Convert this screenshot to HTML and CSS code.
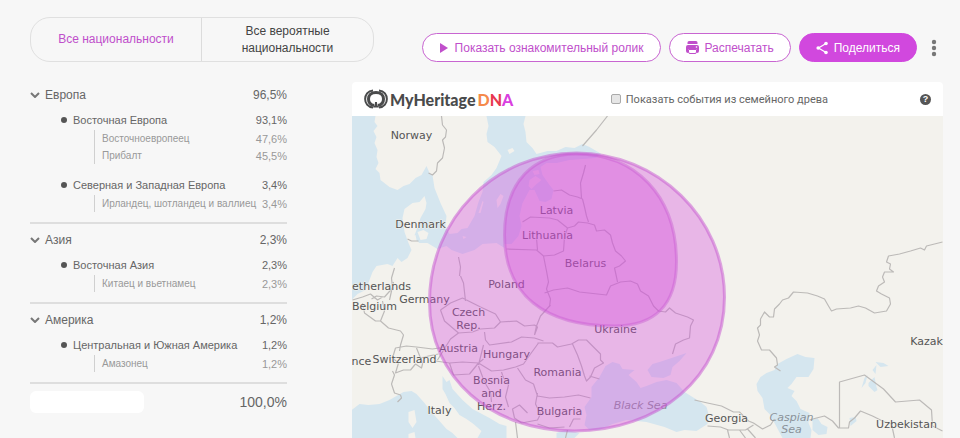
FILE: index.html
```html
<!DOCTYPE html>
<html lang="ru">
<head>
	<meta charset="utf-8">
	<meta name="viewport" content="width=device-width, initial-scale=1">
	<title>MyHeritage DNA</title>
	<link rel="stylesheet" href="styles.css">
</head>
<body>
	<div class="page">
		<header class="topBar">
			<div class="tabs">
				<button type="button" class="tab on">Все национальности</button>
				<button type="button" class="tab">Все вероятные национальности</button>
			</div>
			<div class="actions">
				<button type="button" class="btn">
					<svg class="icoPlay" width="10" height="12" viewBox="0 0 10 12"><path d="M1 1v10l8-5z"/></svg>
					Показать ознакомительный ролик
				</button>
				<button type="button" class="btn">
					<svg class="icoPrint" width="13" height="13" viewBox="0 0 13 13">
						<path d="M3 0h7a1.500 1.500 0 0 1 1.500 1.500V3h-10V1.500A1.500 1.500 0 0 1 3 0z"/>
						<path d="M2 4h9a2 2 0 0 1 2 2v4a2 2 0 0 1-2 2V8H2v4a2 2 0 0 1-2-2V6a2 2 0 0 1 2-2z"/>
						<path d="M2.500 8.500h8V11a1.500 1.500 0 0 1-1.500 1.500H4A1.500 1.500 0 0 1 2.500 11z" fill="none" stroke="currentColor"/>
						<circle cx="10.500" cy="6" r="0.800" fill="#fff"/>
					</svg>
					Распечатать
				</button>
				<button type="button" class="btn share">
					<svg class="icoShare" width="12" height="14" viewBox="0 0 12 14">
						<path d="M10 2.500L2.500 7l7.500 4.500" fill="none" stroke="currentColor" stroke-width="1.300"/>
						<circle cx="10" cy="2.500" r="1.800"/><circle cx="2.200" cy="7" r="1.800"/><circle cx="10" cy="11.500" r="1.800"/>
					</svg>
					Поделиться
				</button>
				<button type="button" class="more" aria-label="Ещё">
					<svg width="6" height="18" viewBox="0 0 6 18"><circle cx="3" cy="3" r="2.200"/><circle cx="3" cy="9" r="2.200"/><circle cx="3" cy="15" r="2.200"/></svg>
				</button>
			</div>
		</header>

		<div class="content">
			<aside class="list">
				<section class="group">
					<button type="button" class="row groupName">
						<svg class="arrow" width="10" height="6" viewBox="0 0 10 6"><path d="M1 1l4 4 4-4"/></svg>
						<span>Европа</span><span class="num">96,5%</span>
					</button>
					<div class="region">
						<div class="row regionName"><span>Восточная Европа</span><span class="num">93,1%</span></div>
						<ul class="people">
							<li class="row"><span>Восточноевропеец</span><span class="num">47,6%</span></li>
							<li class="row"><span>Прибалт</span><span class="num">45,5%</span></li>
						</ul>
					</div>
					<div class="region">
						<div class="row regionName"><span>Северная и Западная Европа</span><span class="num">3,4%</span></div>
						<ul class="people">
							<li class="row"><span>Ирландец, шотландец и валлиец</span><span class="num">3,4%</span></li>
						</ul>
					</div>
				</section>
				<section class="group">
					<button type="button" class="row groupName">
						<svg class="arrow" width="10" height="6" viewBox="0 0 10 6"><path d="M1 1l4 4 4-4"/></svg>
						<span>Азия</span><span class="num">2,3%</span>
					</button>
					<div class="region">
						<div class="row regionName"><span>Восточная Азия</span><span class="num">2,3%</span></div>
						<ul class="people">
							<li class="row"><span>Китаец и вьетнамец</span><span class="num">2,3%</span></li>
						</ul>
					</div>
				</section>
				<section class="group">
					<button type="button" class="row groupName">
						<svg class="arrow" width="10" height="6" viewBox="0 0 10 6"><path d="M1 1l4 4 4-4"/></svg>
						<span>Америка</span><span class="num">1,2%</span>
					</button>
					<div class="region">
						<div class="row regionName"><span>Центральная и Южная Америка</span><span class="num">1,2%</span></div>
						<ul class="people">
							<li class="row"><span>Амазонец</span><span class="num">1,2%</span></li>
						</ul>
					</div>
				</section>
				<div class="total"><span class="blank"></span><span class="num">100,0%</span></div>
			</aside>

			<main class="card">
				<div class="cardHead">
					<div class="logo">
						<svg width="24" height="20" viewBox="0 0 24 20">
							<g fill="none" stroke="#4a4b4c">
								<path d="M9 1.500C-1.500 2-1.500 18 9 18.500M15 1.500c10.500.500 10.500 16.500 0 17" stroke-width="2"/>
								<path d="M12 3.500c-5 0-7.500 3-7.500 6.500 0 4 3 6 5.500 6.500M12 3.500c5 0 7.500 3 7.500 6.500 0 4-3 6-5.500 6.500" stroke-width="3"/>
							</g>
							<path d="M11 13h2c0 2 .500 4 2 5.500H9c1.500-1.500 2-3.500 2-5.500z" fill="#4a4b4c"/>
						</svg>
						<span class="logoText">MyHeritage</span>
						<span class="dna"><span class="d">D</span><span class="n">N</span><span class="a">A</span></span>
					</div>
					<label class="check"><input type="checkbox"> Показать события из семейного древа</label>
					<button type="button" class="help">?</button>
				</div>
				<svg class="map" viewBox="352 116 592 322" preserveAspectRatio="xMidYMin slice">
					<!-- seas -->
					<g class="water">
						<path d="M352 116H376L375 122 378 126 374 131 377 137 375 143 378 150 377 157 379 163 376 169 380 173 381 180 390 187 398 190 404 186 410 184 416 178 422 175 427 166 430 173 433 175 435 188 441 203 447 216 446 226 450 234 458 233 462 229 468 228 475 216 479 202 483 192 484 182 492 175 497 168 502 156 495 147 488 142 487 134 489 126 487 116H526L524 124 526 132 527 142 533 148 537 154 548 151 557 151 566 147 575 148 583 144 590 147 602 154 596 158 583 159 570 160 557 163 547 163 541 167 543 175 550 185 554 190 552 199 546 202 540 201 535 190 530 190 523 203 520 216 522 226 519 236 512 244 505 244 505 248 497 243 483 244 475 250 463 254 452 250 447 246 438 249 428 243 420 243 414 238 417 230 421 218 426 209 427 203 425 196 420 202 413 203 405 209 403 218 405 232 409 243 412 250 408 258 402 262 398 258 393 266 388 264 377 266 373 272 370 280 366 290 358 294 352 300z"/>
						<path d="M443 376L447 382 450 380 453 389 463 400 473 409 490 418 500 424 507 426V438H478L482 431 474 424 467 419 460 415 455 408 450 403 446 394 443 389z"/>
						<path d="M352 410L360 404 369 405 380 404 390 400 397 396 404 392 412 391 417 394 425 403 432 412 440 421 447 429 453 433 458 438H352z"/>
						<path d="M592 387L600 377 606 366 613 362 620 364 623 369 635 370 629 375 637 382 641 388 647 386 657 382 667 380 677 383 685 392 693 397 701 402 707 407 709 414 708 424 697 431 685 430 677 432 665 427 647 422 627 420 613 424 600 430 590 430 585 425 587 415 585 407 592 397z"/>
						<path d="M648 370L653 364 660 362 672 358 687 353 680 361 673 367 671 375 664 378 652 377z"/>
						<path d="M557 433l8-3 7 1 8 2-5 5h-18z"/>
						<path d="M757 384L761 377 767 373 775 370 778 364 787 359 798 354 806 357 815 358 814 369 809 377 797 377 792 384 788 388 795 391 792 396 797 401 801 409 810 413 809 423 812 430 811 438H783L775 423 770 414 765 409 763 398 758 391z"/>
						<path d="M813 420l5-2 4 6 6 3-1 7-8 1-6-5z"/>
						<path d="M862 388l3-10 3-3-2 8zM869 383l6-6 2 10 1 3-3 2-6-6zM876 362l8 1 5 3-8 1zM873 370l4-5-1 9zM850 418l6-1 1 4-6 5z"/>
					</g>
					<g class="land">
						<path d="M418 232l6-2 5 3-2 6-6 1zM412 236l4-1 1 5-4 1zM497 200l4-6 3 2-3 8-3 4zM479 213l4-12 1 1-3 11zM530 180l6-4 6 4-6 5-4 4-3-3zM533 171l6-1 1 4-5 1zM508 150l5-2 2 3-5 3zM409 412l6-2 2 12-4 6-4-6zM409 434l6-2 1 6h-7zM463 236l4 1-3 2z"/>
					</g>
					<!-- borders -->
					<g class="border">
						<path d="M442 116l1 9 4 5-1 7-3 3 2 8-2 10-5 5-1 8-4 4-4-2M608 116l-11 14-14 16M586 165l-2 8-3 10 1 15M554 191l8-1 8 5 8 2 5 2 2 8 2 9 2 6M523 222l8-5 19 1 8 2 10 8M568 228l7-2 4-4 9 1 7 2 2 6 8-1 6 5 2 8 3 8 6 5 4 5-6 5-5 2 2 9 1 5M507 249l30 1 7 6 3 15 2 11-2 7 4 10-1 8M538 250l-1-12M544 256l11-1 9-4 1-14 3-9M545 293l9-3 14-2 12 4 27 3 4-9 10-4 10-1 7 3 3 7 8 5 5 10 5 5 7 1 4-4 6 5 12 4 6 3-3 6-1 12-6 2-8 4-3 10M459 257l2 10-1 9M461 276l3 7 2 18M441 310l10-7 12-5 18 9 15 7 5 8M441 310l4 11 14 12 14-1 8-3 14-1 6-6M501 322l16-1 8 5 10-1 3 2-3 8M551 305l-10 11-4 10-2 9M485 332l1 8 4 5 22-3 10-5 13 1 9 3M484 345l-5 20M459 333l-8 6-5 8-8 13M436 361l14 2 13-1 16 1 5-4M479 363l13 8 12-1 12-3 8-3 7-10 8-11M538 343l15 0 5 4 14-3 7-4 8 0 8 8 6 6 0 6 3 3-9 5-4 9-4 4-2-5-3-10-4-11-5-11M518 368l8 12 8 4 4 12 12 2 15-1 14-2 12 3M590 376l10 3M450 363l4 12 16-1 9-11M479 366l6 16 6 10 1 10M502 372l2 6 5 7-3 12 3 10M538 393l-2 11 5 10-3 6-16 3-7-5-2-9 7-4 8 8M516 422l2 16M538 424l12 4 15-1M570 427l4-8 7 0M568 430l-2 8M395 268l-3 10 1 10-8 9-8-1-5 3M353 300l10-3 8-3 7 6 5-3M363 303l2 10 11 8 5 0 4-10-2-10M381 321l8 7 12 3 3 4-3 10-1 6M393 358l3-10 11-2 10 1 16 2 13-2M417 348l4 10 8-2 10-2M393 358l6 5-3 10 8-3 7 0 5-6 6 4 2-8M393 371l2 4-3 9 3 9 6 2 1 3-4 4M390 300l4-18M408 239l4 2 7 0"/>
						<path d="M943 242l-12 3-4 1-2 4-4-2-10 3-11 3-11 2-2 6 4 2-1 5 4 3-9 0-2 5 2 5-6 4-2 5 5 3 8 4 1 6-4 7-12 2-9-5-7-2-8 2-14 1-5 2-3-5-4-7-7-3-10-3-14-1-5 6-6 2-3 4-5 5-1 8-4 0-5-5-4 7 0 6-3 3 2 7-2 6 4 9 8 0 7 8 1 7-3 2 6 4"/>
						<path d="M840 428V382L865 375 884 389 896 402 920 400 932 410 933 426 943 431M810 420l7-2 8-2 8 5 6 7 10 0 1-6 5-4 6-7 12 5 10 5 9 3 3 14M695 400l13 3 14 3 12 6 6 0 9 9 5 2 9 6 8-4 4-6M708 426l13 1 8 3 17 0 8-5M728 430l2 8M740 430l6 8M748 429l8 9"/>
					</g>
					<g class="label">
						<text x="412" y="139">Norway</text>
						<text x="421" y="228">Denmark</text>
						<text x="557" y="214">Latvia</text>
						<text x="548" y="239">Lithuania</text>
						<text x="586" y="267">Belarus</text>
						<text x="507" y="288">Poland</text>
						<text x="382" y="290">etherlands</text>
						<text x="425" y="303">Germany</text>
						<text x="375" y="310">Belgium</text>
						<text x="469" y="316">Czech</text>
						<text x="469" y="329">Rep.</text>
						<text x="616" y="333">Ukraine</text>
						<text x="459" y="352">Austria</text>
						<text x="507" y="358">Hungary</text>
						<text x="362" y="365">nce</text>
						<text x="405" y="363">Switzerland</text>
						<text x="558" y="376">Romania</text>
						<text x="492" y="384">Bosnia</text>
						<text x="492" y="397">and</text>
						<text x="492" y="410">Herz.</text>
						<text x="440" y="414">Italy</text>
						<text x="560" y="415">Bulgaria</text>
						<text x="727" y="422">Georgia</text>
						<text x="907" y="428">Uzbekistan</text>
						<text x="927" y="345">Kazak</text>
						<text x="641" y="409" class="sea">Black Sea</text>
						<text x="792" y="421" class="sea">Caspian</text>
						<text x="792" y="433" class="sea">Sea</text>
					</g>
					<!-- ethnicity areas -->
					<path class="area" d="M577 153C658 153 725 218 725 297C725 378 658 431 575 431C492 431 430 378 430 302C430 218 496 153 577 153z"/>
					<path class="area inner" d="M577 154C535 154 505 180 505 235C505 295 545 326 615 326C655 326 677 305 677 262C677 195 635 154 577 154z"/>
				</svg>
			</main>
		</div>
	</div>
</body>
</html>
```
FILE: styles.css
```css
* {margin:0; padding:0; box-sizing:border-box;}
body {color:#666; font-family:"Liberation Sans", Arial, sans-serif; font-size:12px; background:#f7f7f7;}
button {color:inherit; font-family:inherit; font-size:inherit; border:0; background:none; cursor:pointer;}
ul {list-style:none;}
.page {padding:17px 17px 0 30px;}

.topBar {display:flex; justify-content:space-between; align-items:flex-end;}
.tabs {display:flex; width:344px; height:45px; border:1px solid #e0e0e0; border-radius:20px;}
.tab {width:50%; padding:0 36px; color:#444; font-size:12px; line-height:17px;}
.tab.on {padding:0; color:#c04fcb; border-right:1px solid #dcdcdc;}
.actions {display:flex; align-items:center; gap:8px; padding-right:6px;}
.btn {display:flex; align-items:center; gap:6px; padding:0 16px; height:29px; color:#c04fcb; font-size:12px; white-space:nowrap; border:1px solid #c865d1; border-radius:15px; background:#fff;}
.btn svg, .more svg {fill:currentColor;}
.btn.share {color:#fff; border-color:#d148de; background:#d148de;}
.more {display:flex; justify-content:center; margin-left:6px; width:6px; color:#777;}

.content {display:flex; align-items:flex-start; gap:65px; padding-top:20px;}
.list {flex:none; width:257px;}
.group {padding-bottom:10px; border-bottom:2px solid #dedede;}
.group + .group {padding-top:3px;}
.row {display:flex; align-items:center; width:100%;}
.num {margin-left:auto;}
.groupName {height:26px; font-size:12px; text-align:left;}
.arrow {margin-right:5px; fill:none; stroke:#777; stroke-width:2;}
.region {padding:2px 0 0 31px; font-size:11px;}
.region + .region {padding-top:11px;}
.regionName {height:20px;}
.regionName:before {content:""; margin-right:6px; width:6px; height:6px; border-radius:50%; background:#555;}
.people {padding-left:33px; color:#999; font-size:10px;}
.people .row {padding-left:7px; height:17px; white-space:nowrap; border-left:1px solid #d0d0d0;}
.people .num {font-size:11px;}
.total {display:flex; align-items:center; height:36px; font-size:14px;}
.blank {width:114px; height:22px; border-radius:6px; background:#fff;}

.card {flex:1; min-width:0; border-radius:4px 4px 0 0; background:#fff; overflow:hidden;}
.cardHead {display:flex; align-items:center; padding:0 12px; height:34px;}
.logo {display:flex; align-items:center; gap:2px; color:#4a4b4c; font-family:Lato, sans-serif; font-size:16px; font-weight:900;}
.dna .d {color:#f58a4b;}
.dna .n {color:#e8384f;}
.dna .a {color:#d93fe0;}
.check {display:flex; align-items:center; gap:5px; margin-left:auto; margin-right:92px; font-family:Roboto, sans-serif; font-size:11px; white-space:nowrap;}
.check input {appearance:none; width:10px; height:10px; border:1px solid #aaa; border-radius:2px; background:#e6e6e6;}
.help {width:11px; height:11px; color:#fff; font-size:9px; font-weight:bold; line-height:11px; border-radius:50%; background:#555;}

.map {display:block; width:100%; height:calc(100vh - 116px); min-height:322px; background:#f3f2ed;}
.water {fill:#d5e6ef;}
.land {fill:#f3f2ed;}
.border {fill:none; stroke:#bcbab8; stroke-width:1.2; stroke-linejoin:round;}
.label {fill:#555; font-family:"DejaVu Sans", sans-serif; font-size:11px; text-anchor:middle; paint-order:stroke; stroke:#f3f2ed; stroke-width:1px;}
.label .sea {fill:#8a9299; font-style:italic; stroke:none;}
.area {fill:#d448de; fill-opacity:.35; stroke:#c555cf; stroke-opacity:.5; stroke-width:3;}
.area.inner {stroke-opacity:.4;}
```
